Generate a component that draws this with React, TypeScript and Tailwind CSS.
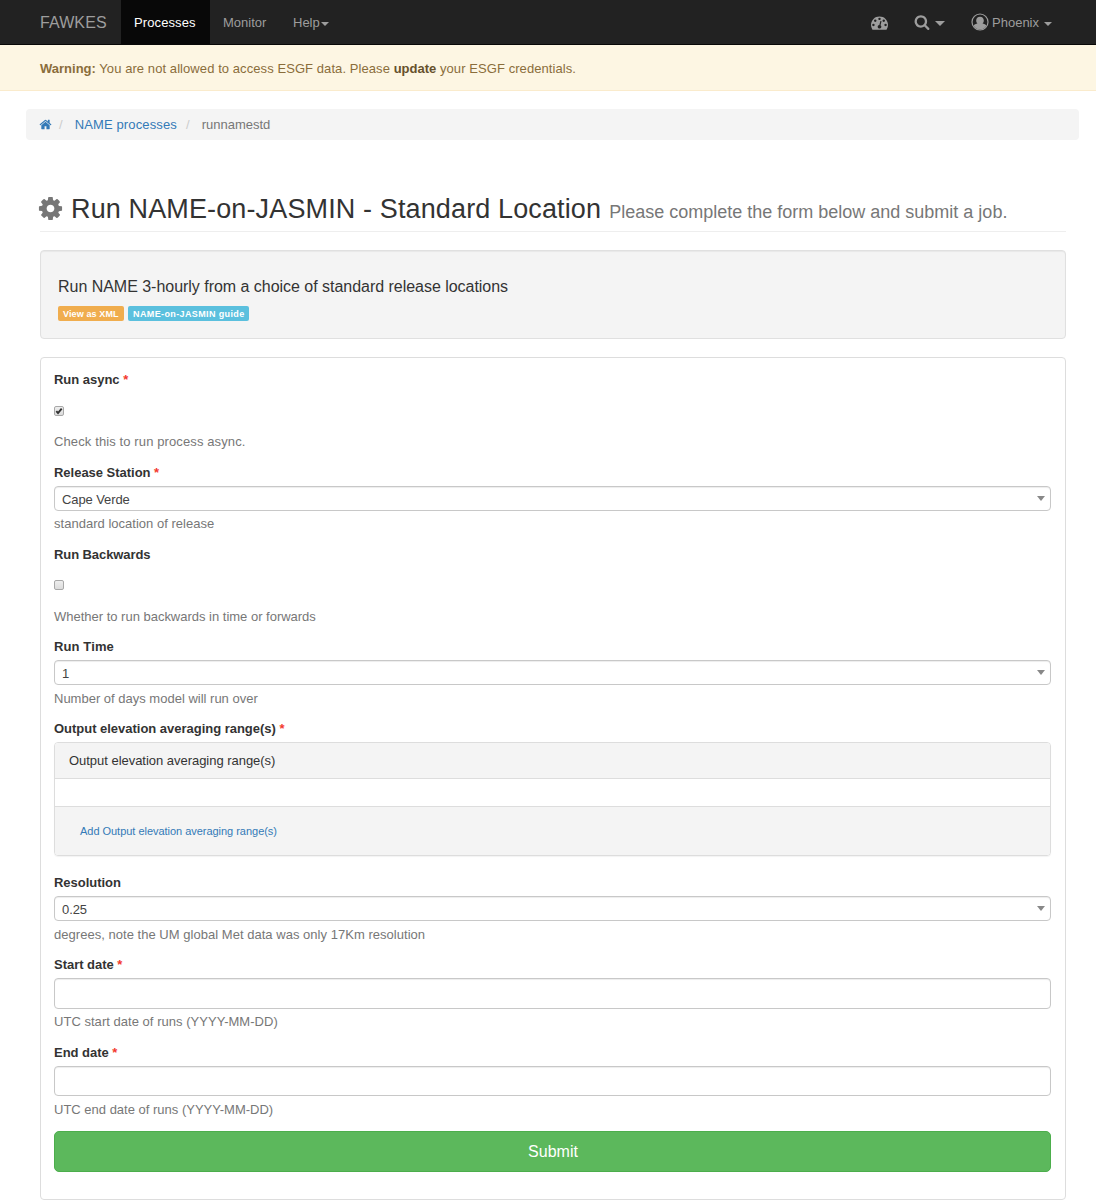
import React from "react";

const PATHS = {
  home: "M1472 992v480q0 26-19 45t-45 19h-384v-384h-256v384h-384q-26 0-45-19t-19-45v-480q0-1 .5-3t.5-3l575-474 575 474q1 2 1 6zm223-69l-62 74q-8 9-21 11h-3q-13 0-21-7l-692-577-692 577q-12 8-24 7-13-2-21-11l-62-74q-8-10-7-23.5t11-21.5l719-599q32-26 76-26t76 26l244 204v-195q0-14 9-23t23-9h192q14 0 23 9t9 23v408l219 182q10 8 11 21.5t-7 23.5z",
  cog: "M1152 896q0-106-75-181t-181-75-181 75-75 181 75 181 181 75 181-75 75-181zm512-109v222q0 12-8 23t-20 13l-185 28q-19 54-39 91 35 50 107 138 10 12 10 25t-9 23q-27 37-99 108t-94 71q-12 0-26-9l-138-108q-44 23-91 38-16 136-29 186-7 28-36 28h-222q-14 0-24.5-8.5t-11.5-21.5l-28-184q-49-16-90-37l-141 107q-10 9-25 9-14 0-25-11-126-114-165-168-7-10-7-23 0-12 8-23 15-21 51-66.5t54-70.5q-27-50-41-99l-183-27q-13-2-21-12.5t-8-23.5v-222q0-12 8-23t19-13l186-28q14-46 39-92-40-57-107-138-10-12-10-24 0-10 9-23 26-36 98.5-107.5t94.5-71.5q13 0 26 10l138 107q44-23 91-38 16-136 29-186 7-28 36-28h222q14 0 24.5 8.5t11.5 21.5l28 184q49 16 90 37l142-107q9-9 24-9 13 0 25 10 129 119 165 170 7 8 7 22 0 12-8 23-15 21-51 66.5t-54 70.5q26 50 41 98l183 28q13 2 21 12.5t8 23.5z",
  search: "M1216 832q0-185-131.5-316.5t-316.5-131.5-316.5 131.5-131.5 316.5 131.5 316.5 316.5 131.5 316.5-131.5 131.5-316.5zm512 832q0 52-38 90t-90 38q-54 0-90-38l-343-342q-179 124-399 124-143 0-273.5-55.5t-225-150-150-225-55.5-273.5 55.5-273.5 150-225 225-150 273.5-55.5 273.5 55.5 225 150 150 225 55.5 273.5q0 220-124 399l343 343q37 37 37 90z",
  gauge: "M384 1152q0-53-37.5-90.5t-90.5-37.5-90.5 37.5-37.5 90.5 37.5 90.5 90.5 37.5 90.5-37.5 37.5-90.5zm192-448q0-53-37.5-90.5t-90.5-37.5-90.5 37.5-37.5 90.5 37.5 90.5 90.5 37.5 90.5-37.5 37.5-90.5zm428 481l101-382q6-26-7.5-48.5t-38.5-29.5-48 6.5-30 39.5l-101 382q-60 5-107 43.5t-63 98.5q-20 77 20 146t117 89 146-20 89-117q16-60-6-117t-72-91zm660-33q0-53-37.5-90.5t-90.5-37.5-90.5 37.5-37.5 90.5 37.5 90.5 90.5 37.5 90.5-37.5 37.5-90.5zm-640-640q0-53-37.5-90.5t-90.5-37.5-90.5 37.5-37.5 90.5 37.5 90.5 90.5 37.5 90.5-37.5 37.5-90.5zm448 192q0-53-37.5-90.5t-90.5-37.5-90.5 37.5-37.5 90.5 37.5 90.5 90.5 37.5 90.5-37.5 37.5-90.5zm320 448q0 261-141 483-19 29-54 29h-1402q-35 0-54-29-141-221-141-483 0-182 71-348t191-286 286-191 348-71 348 71 286 191 191 286 71 348z",
};

function Icon({ name, className }: { name: keyof typeof PATHS; className: string }) {
  return (
    <svg viewBox="0 0 1792 1792" fill="currentColor" className={`shrink-0 ${className}`}>
      <path d={PATHS[name]} />
    </svg>
  );
}

function UserIcon() {
  return (
    <svg viewBox="0 0 18 18" className="h-[18px] w-[18px] shrink-0">
      <circle cx="9" cy="9" r="8" fill="none" stroke="currentColor" strokeWidth="1.2" />
      <path
        fill="currentColor"
        d="M9 3.700c2.300 0 3.800 1.600 3.800 3.800 0 1.200-.5 2.300-1.300 3 1.600.2 3.200.8 3.900 2.100C14.200 15 11.800 16.600 9 16.600S3.800 15 2.600 12.600c.7-1.300 2.300-1.900 3.900-2.100-.8-.7-1.300-1.800-1.300-3C5.200 5.300 6.700 3.700 9 3.700z"
      />
    </svg>
  );
}

function Caret({ className = "" }: { className?: string }) {
  return <span className={`border-x-4 border-t-4 border-x-transparent ${className}`} />;
}

function Label({ children, required, className = "" }: { children: React.ReactNode; required?: boolean; className?: string }) {
  return (
    <div className={`h-[18px] font-bold leading-[18px] tracking-[-0.02px] ${className}`}>
      {children}
      {required && <span className="text-[#f33a2e]"> *</span>}
    </div>
  );
}

function Help({ children, className = "" }: { children: React.ReactNode; className?: string }) {
  return <div className={`h-[18px] leading-[18px] text-[#777] ${className}`}>{children}</div>;
}

function Select({ value, className = "" }: { value: string; className?: string }) {
  return (
    <div className={`flex h-[25px] items-center justify-between rounded-[4px] border border-[#c8c8c8] pl-[7px] pr-[5px] text-[#444] shadow-[inset_0_1px_1px_rgba(0,0,0,0.075)] ${className}`}>
      <span className="pt-[2px] tracking-[-0.1px]">{value}</span>
      <span className="border-x-4 border-t-[5px] border-x-transparent border-t-[#888]" />
    </div>
  );
}

function Check({ checked }: { checked?: boolean }) {
  return (
    <div className="h-[10px] w-[10px] rounded-[2px] border border-[#a8a8a8] bg-linear-to-b from-[#eeeeee] to-[#dcdcdc]">
      {checked && (
        <svg viewBox="0 0 8 8" className="block h-2 w-2">
          <path d="M1.300 4.200 3 6 6.700 1.600" fill="none" stroke="#333" strokeWidth="1.900" />
        </svg>
      )}
    </div>
  );
}

function Input({ className }: { className: string }) {
  return <input className={`block w-full rounded-[4px] border border-[#c8c8c8] px-2.5 shadow-[inset_0_1px_1px_rgba(0,0,0,0.075)] ${className}`} />;
}

export default function App() {
  return (
    <div className="h-[1200px] overflow-hidden bg-white font-['Liberation_Sans',Arial,sans-serif] text-[13px] text-[#333]">
      <nav className="flex h-[45px] justify-between border-b border-[#080808] bg-[#222] pl-10 pr-11 text-[#9d9d9d]">
        <div className="flex">
          <span className="w-[81px] text-[16px] leading-[46px] tracking-[0.1px]">FAWKES</span>
          <span className="w-[89px] bg-[#080808] pl-[13px] leading-[46px] tracking-[0.1px] text-white">Processes</span>
          <span className="w-[70px] pl-[13px] leading-[46px]">Monitor</span>
          <span className="flex pl-[13px] leading-[46px]">
            Help
            <Caret className="ml-[1px] mt-[22px] self-start" />
          </span>
        </div>
        <div className="flex">
          <Icon name="gauge" className="mr-[26px] mt-[14px] h-[17px] w-[17px]" />
          <Icon name="search" className="mt-[14px] h-4 w-4" />
          <span className="ml-[5px] mt-[21px] self-start border-x-[5px] border-t-[5px] border-x-transparent" />
          <span className="ml-[26px] flex">
            <span className="mt-[13px]"><UserIcon /></span>
            <span className="ml-[3px] leading-[46px]">Phoenix</span>
            <Caret className="ml-[5px] mt-[22px] self-start" />
          </span>
        </div>
      </nav>

      <div className="h-[46px] border-b border-[#faebcc] bg-[#fdf6e3] pl-10 leading-[47px] tracking-[0.075px] text-[#8a6d3b]">
        <b className="tracking-normal">Warning:</b> You are not allowed to access ESGF data. Please <b className="tracking-normal text-[#66512c]">update</b> your ESGF credentials.
      </div>

      <div className="ml-[26px] mr-[17px] mt-[18px] flex h-[31px] items-center rounded-[4px] bg-[#f4f4f4] pl-[13px] leading-[31px] text-[#777]">
        <Icon name="home" className="h-[13px] w-[13px] text-[#337ab7]" />
        <span className="ml-[7px] text-[#ccc]">/</span>
        <span className="ml-[12px] tracking-[0.14px] text-[#337ab7]">NAME processes</span>
        <span className="ml-[9px] text-[#ccc]">/</span>
        <span className="ml-[12px]">runnamestd</span>
      </div>

      <main className="ml-10 mr-[30px]">
        <h1 className="mt-[46px] flex h-[46px] items-baseline border-b border-[#eee] text-[27px] leading-[46px]">
          <Icon name="cog" className="-ml-[3px] h-[27px] w-[27px] translate-y-[4px] text-[#777]" />
          <span className="ml-[7px] tracking-[0.13px]">Run NAME-on-JASMIN - Standard Location</span>
          <small className="ml-2 text-[18px] text-[#777]">Please complete the form below and submit a job.</small>
        </h1>

        <section className="mt-[18px] h-[89px] rounded-[4px] border border-[#e0e0e0] bg-[#f4f4f4] px-[17px] pt-[26px] shadow-[inset_0_1px_1px_rgba(0,0,0,0.05)]">
          <h2 className="h-[20px] text-[16px] leading-[20px] tracking-[-0.028px]">Run NAME 3-hourly from a choice of standard release locations</h2>
          <div className="mt-[9px] flex gap-1 text-[9px] font-bold leading-[16px] text-white">
            <span className="h-[15px] w-[66px] rounded-[2px] bg-[#f0ad4e] pl-[5px] tracking-[0.12px]">View as XML</span>
            <span className="h-[15px] w-[121px] rounded-[2px] bg-[#5bc0de] pl-[5px] tracking-[0.38px]">NAME-on-JASMIN guide</span>
          </div>
        </section>

        <form className="mt-[18px] h-[843px] rounded-[4px] border border-[#ddd] pl-[13px] pr-[14px] pt-[13px]">
          <Label required className="mb-[17px]">Run async</Label>
          <Check checked />
          <Help className="mb-[13px] mt-[17px] tracking-[0.115px]">Check this to run process async.</Help>

          <Label required>Release Station</Label>
          <Select value="Cape Verde" className="mt-[4px]" />
          <Help className="mb-[13px] mt-[4px] tracking-[0.02px]">standard location of release</Help>

          <Label className="mb-[16px]"><span className="tracking-[-0.08px]">Run Backwards</span></Label>
          <Check />
          <Help className="mb-[12px] mt-[18px] tracking-[-0.01px]">Whether to run backwards in time or forwards</Help>

          <Label><span className="tracking-[0.12px]">Run Time</span></Label>
          <Select value="1" className="mt-[4px]" />
          <Help className="mb-[12px] mt-[5px]">Number of days model will run over</Help>

          <Label required>Output elevation averaging range(s)</Label>
          <div className="mb-[18px] mt-[4px] h-[114px] rounded-[4px] border border-[#ddd] shadow-[0_1px_1px_rgba(0,0,0,0.05)]">
            <div className="h-[36px] rounded-t-[3px] border-b border-[#ddd] bg-[#f4f4f4] pl-[14px] leading-[36px] tracking-[-0.03px]">Output elevation averaging range(s)</div>
            <div className="h-[27px]" />
            <div className="h-[49px] rounded-b-[3px] border-t border-[#ddd] bg-[#f4f4f4] pl-[25px] text-[11px] leading-[48px] tracking-[-0.03px] text-[#337ab7]">Add Output elevation averaging range(s)</div>
          </div>

          <Label>Resolution</Label>
          <Select value="0.25" className="mt-[4px]" />
          <Help className="mb-[12px] mt-[5px] tracking-[0.03px]">degrees, note the UM global Met data was only 17Km resolution</Help>

          <Label required>Start date</Label>
          <Input className="mt-[4px] h-[31px]" />
          <Help className="mb-[13px] mt-[4px] tracking-[0.03px]">UTC start date of runs (YYYY-MM-DD)</Help>

          <Label required>End date</Label>
          <Input className="mt-[4px] h-[30px]" />
          <Help className="mb-[12px] mt-[5px]">UTC end date of runs (YYYY-MM-DD)</Help>

          <button type="button" className="block h-[41px] w-full rounded-[5px] border border-[#4cae4c] bg-[#5cb85c] pl-[1px] text-[16px] leading-[39px] text-white">Submit</button>
        </form>
      </main>
    </div>
  );
}
